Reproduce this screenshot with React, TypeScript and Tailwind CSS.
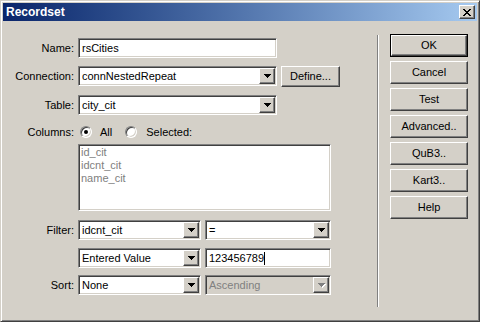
import React from "react";

const sunken =
  "border border-t-[#808080] border-l-[#808080] border-b-white border-r-white shadow-[inset_1px_1px_0_#404040,inset_-1px_-1px_0_#d4d0c8] p-[1px]";
const raised =
  "border border-t-white border-l-white border-b-[#404040] border-r-[#404040] shadow-[inset_-1px_-1px_0_#808080]";

function Arrow({ disabled }: { disabled?: boolean }) {
  const fill = disabled ? "#808080" : "#000";
  return (
    <svg width="8" height="5" viewBox="0 0 8 5" shapeRendering="crispEdges">
      {disabled && (
        <g fill="#fff">
          <rect x="1" y="1" width="7" height="1" />
          <rect x="2" y="2" width="5" height="1" />
          <rect x="3" y="3" width="3" height="1" />
          <rect x="4" y="4" width="1" height="1" />
        </g>
      )}
      <g fill={fill}>
        <rect x="0" y="0" width="7" height="1" />
        <rect x="1" y="1" width="5" height="1" />
        <rect x="2" y="2" width="3" height="1" />
        <rect x="3" y="3" width="1" height="1" />
      </g>
    </svg>
  );
}

function Select({ value, width, disabled }: { value: string; width: string; disabled?: boolean }) {
  return (
    <div className={`${sunken} ${width} h-[20px] flex ${disabled ? "bg-[#d4d0c8] text-[#808080]" : "bg-white"}`}>
      <span className="flex-1 pl-[2px] leading-[16px] truncate">{value}</span>
      <div className={`${raised} w-[16px] h-[16px] bg-[#d4d0c8] flex items-center justify-center pl-[1px]`}>
        <Arrow disabled={disabled} />
      </div>
    </div>
  );
}

function Input({ value, width, caret }: { value: string; width: string; caret?: boolean }) {
  return (
    <div className={`${sunken} ${width} h-[20px] bg-white flex items-center`}>
      <span className="pl-[2px] leading-[16px]">{value}</span>
      {caret && <span className="w-[1px] h-[13px] bg-black" />}
    </div>
  );
}

function Row({ label, className, children }: { label?: string; className: string; children: React.ReactNode }) {
  return (
    <div className={`flex items-center ${className}`}>
      <div className="w-[71px] text-right">{label}</div>
      <div className="ml-[4px] flex items-center gap-[4px]">{children}</div>
    </div>
  );
}

function Radio({ checked }: { checked?: boolean }) {
  return (
    <div className="w-[12px] h-[12px] rounded-full border border-t-[#808080] border-l-[#808080] border-b-white border-r-white bg-white shadow-[inset_1px_1px_0_#404040,inset_-1px_-1px_0_#d4d0c8] flex items-center justify-center">
      {checked && <div className="w-[4px] h-[4px] rounded-full bg-black" />}
    </div>
  );
}

function Button({ label, isDefault }: { label: string; isDefault?: boolean }) {
  if (isDefault) {
    return (
      <div className="w-[78px] h-[23px] border border-black">
        <div className={`${raised} w-full h-full flex items-center justify-center`}>{label}</div>
      </div>
    );
  }
  return <div className={`${raised} w-[78px] h-[23px] flex items-center justify-center`}>{label}</div>;
}

export default function App() {
  return (
    <div className="w-[480px] h-[322px] bg-[#d4d0c8] border border-t-[#d4d0c8] border-l-[#d4d0c8] border-b-[#404040] border-r-[#404040] shadow-[inset_1px_1px_0_#fff,inset_-1px_-1px_0_#808080] p-[2px] font-['Liberation_Sans',Arial,sans-serif] text-[11px] text-black flex flex-col overflow-hidden">
      {/* title bar */}
      <div className="h-[18px] bg-linear-to-r from-[#0a246a] to-[#a6caf0] flex items-center justify-between pl-[3px] pr-[2px]">
        <span className="text-white font-bold text-[12px]">Recordset</span>
        <div className={`${raised} w-[16px] h-[14px] bg-[#d4d0c8] flex items-center justify-center`}>
          <svg width="8" height="7" viewBox="0 0 8 7" shapeRendering="crispEdges" fill="#000">
            <rect x="0" y="0" width="2" height="1" />
            <rect x="6" y="0" width="2" height="1" />
            <rect x="1" y="1" width="2" height="1" />
            <rect x="5" y="1" width="2" height="1" />
            <rect x="2" y="2" width="4" height="1" />
            <rect x="3" y="3" width="2" height="1" />
            <rect x="2" y="4" width="4" height="1" />
            <rect x="1" y="5" width="2" height="1" />
            <rect x="5" y="5" width="2" height="1" />
            <rect x="0" y="6" width="2" height="1" />
            <rect x="6" y="6" width="2" height="1" />
          </svg>
        </div>
      </div>

      <div className="flex flex-1">
        {/* form */}
        <div className="w-[374px] flex flex-col pt-[17px]">
          <Row label="Name:" className="">
            <Input value="rsCities" width="w-[199px]" />
          </Row>
          <Row label="Connection:" className="mt-[7px]">
            <Select value="connNestedRepeat" width="w-[199px]" />
            <div className={`${raised} w-[59px] h-[21px] mt-[1px] flex items-center justify-center`}>Define...</div>
          </Row>
          <Row label="Table:" className="mt-[8px]">
            <Select value="city_cit" width="w-[199px]" />
          </Row>
          <Row label="Columns:" className="mt-[8px] h-[18px]">
            <div className="flex items-center ml-[2px]">
              <Radio checked />
              <span className="ml-[8px]">All</span>
              <div className="ml-[13px]">
                <Radio />
              </div>
              <span className="ml-[9px]">Selected:</span>
            </div>
          </Row>
          <Row className="mt-[3px]">
            <div className={`${sunken} w-[253px] h-[67px] bg-white text-[#808080] pl-[2px] leading-[13px]`}>
              <div>id_cit</div>
              <div>idcnt_cit</div>
              <div>name_cit</div>
            </div>
          </Row>
          <Row label="Filter:" className="mt-[9px]">
            <Select value="idcnt_cit" width="w-[123px]" />
            <Select value="=" width="w-[126px]" />
          </Row>
          <Row className="mt-[8px]">
            <Select value="Entered Value" width="w-[123px]" />
            <Input value="123456789" width="w-[126px]" caret />
          </Row>
          <Row label="Sort:" className="mt-[7px]">
            <Select value="None" width="w-[123px]" />
            <Select value="Ascending" width="w-[126px]" disabled />
          </Row>
        </div>

        {/* separator */}
        <div className="w-[2px] h-[272px] mt-[14px] border-l border-l-[#808080] border-r border-r-white" />

        {/* buttons */}
        <div className="ml-[11px] pt-[13px] flex flex-col gap-[4px]">
          <Button label="OK" isDefault />
          <Button label="Cancel" />
          <Button label="Test" />
          <Button label="Advanced.." />
          <Button label="QuB3.." />
          <Button label="Kart3.." />
          <Button label="Help" />
        </div>
      </div>
    </div>
  );
}
